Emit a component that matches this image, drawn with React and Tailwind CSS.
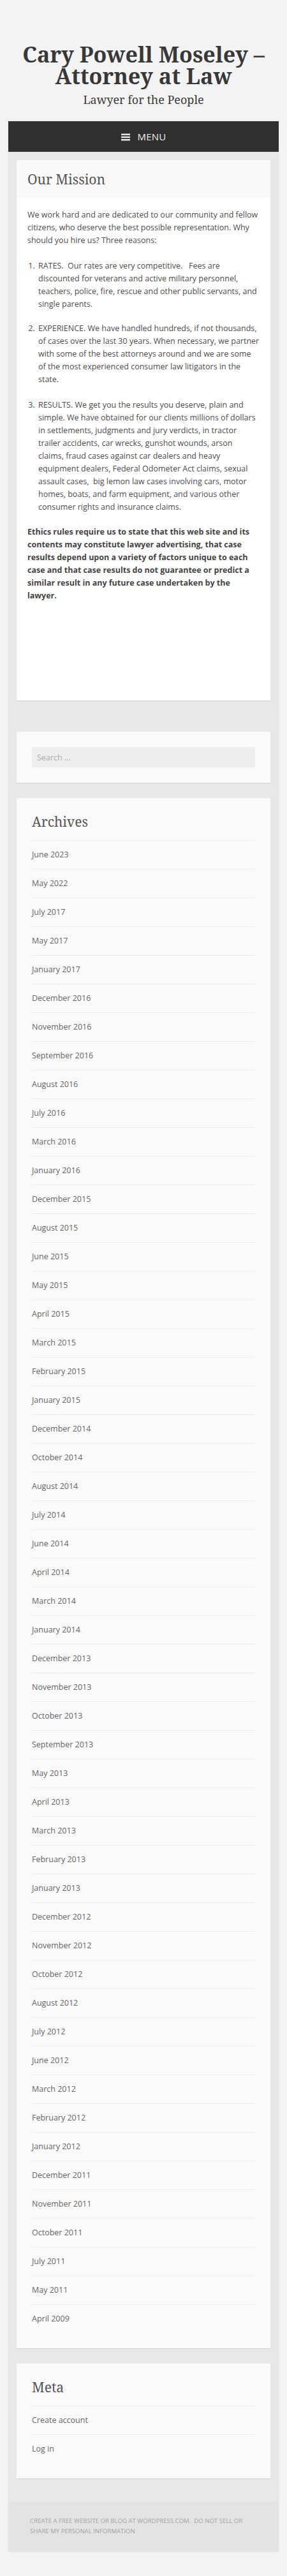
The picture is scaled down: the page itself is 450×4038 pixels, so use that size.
import React from "react";

const archives = [
  "June 2023", "May 2022", "July 2017", "May 2017", "January 2017", "December 2016",
  "November 2016", "September 2016", "August 2016", "July 2016", "March 2016", "January 2016",
  "December 2015", "August 2015", "June 2015", "May 2015", "April 2015", "March 2015",
  "February 2015", "January 2015", "December 2014", "October 2014", "August 2014", "July 2014",
  "June 2014", "April 2014", "March 2014", "January 2014", "December 2013", "November 2013",
  "October 2013", "September 2013", "May 2013", "April 2013", "March 2013", "February 2013",
  "January 2013", "December 2012", "November 2012", "October 2012", "August 2012", "July 2012",
  "June 2012", "March 2012", "February 2012", "January 2012", "December 2011", "November 2011",
  "October 2011", "July 2011", "May 2011", "April 2009",
];

const serif = "font-['Noto_Serif','DejaVu_Serif',serif]";
const sans = "font-['Open_Sans','Noto_Sans',sans-serif]";

const WidgetList = ({ title, items }) => (
  <section className="bg-[#fafafa] p-[24px] shadow-[0_1px_1px_rgba(0,0,0,0.08)]">
    <h2 className={`${serif} text-[21px] leading-[26px] mb-[16px] text-[#555]`}>{title}</h2>
    <ul className="text-[12.5px] leading-[20px]">
      {items.map((item) => (
        <li key={item} className="border-t border-[#ececec] py-[12px] h-[45px]">
          <a href="#" className="block text-[#666]">{item}</a>
        </li>
      ))}
    </ul>
  </section>
);

export default function App() {
  return (
    <div className={`${sans} min-h-[4038px] bg-[#f3f3f3] pb-[35px]`}>
      {/* Header */}
      <header className="pt-[68px] pb-[22px] text-center text-[#383838]">
        <h1 className={`${serif} font-bold text-[34px] leading-[34px] px-[16px]`}>
          Cary Powell Moseley – Attorney at Law
        </h1>
        <p className={`${serif} mt-[8px] text-[18px] leading-[24px] text-[#3a3a3a]`}>
          Lawyer for the People
        </p>
      </header>

      <div className="mx-[13px] bg-[#e8e8e8] shadow-[0_0_3px_rgba(0,0,0,0.06)]">
        {/* Menu */}
        <nav className="h-[48px] bg-[#2f2f2f] flex items-center justify-center gap-[12px]">
          <svg width="14" height="12" viewBox="0 0 14 12" className="mt-[1px]">
            <rect x="0" y="0.5" width="14" height="2.5" fill="#e6e6e6" />
            <rect x="0" y="4.75" width="14" height="2.5" fill="#e6e6e6" />
            <rect x="0" y="9" width="14" height="2.5" fill="#e6e6e6" />
          </svg>
          <span className="text-[15px] text-[#eeeeee] tracking-[0.2px]">MENU</span>
        </nav>

        <div className="p-[13px] pb-[36px]">
          {/* Mission card */}
          <article className="bg-white shadow-[0_1px_1px_rgba(0,0,0,0.08)]">
            <div className="bg-[#f9f9f9] h-[59px] px-[17px] pt-[16px]">
              <h2 className={`${serif} text-[21px] leading-[28px] text-[#555]`}>Our Mission</h2>
            </div>
            <div className="px-[17px] pt-[17px] pb-[154px] text-[12.5px] leading-[20px] text-[#4d4d4d]">
              <p className="mb-[20px]">
                We work hard and are dedicated to our community and fellow citizens, who deserve the best possible representation. Why should you hire us? Three reasons:
              </p>
              <ol className="list-decimal pl-[15px] mb-[19px]">
                <li className="mb-[18px] pl-[2px]">
                  RATES.&nbsp; Our rates are very competitive. &nbsp; Fees are discounted for veterans and active military personnel, teachers, police, fire, rescue and other public servants, and single parents.
                </li>
                <li className="mb-[20px] pl-[2px]">
                  EXPERIENCE. We have handled hundreds, if not thousands, of cases over the last 30 years. When necessary, we partner with some of the best attorneys around and we are some of the most experienced consumer law litigators in the state.
                </li>
                <li className="pl-[2px]">
                  RESULTS. We get you the results you deserve, plain and simple. We have obtained for our clients millions of dollars in settlements, judgments and jury verdicts, in tractor trailer accidents, car wrecks, gunshot wounds, arson claims, fraud cases against car dealers and heavy equipment dealers, Federal Odometer Act claims, sexual assault cases,&nbsp; big lemon law cases involving cars, motor homes, boats, and farm equipment, and various other consumer rights and insurance claims.
                </li>
              </ol>
              <p className="font-bold text-[#444]">
                Ethics rules require us to state that this web site and its contents may constitute lawyer advertising, that case results depend upon a variety of factors unique to each case and that case results do not guarantee or predict a similar result in any future case undertaken by the lawyer.
              </p>
            </div>
          </article>

          {/* Widgets */}
          <div className="mt-[49px] flex flex-col gap-[24px]">
            <section className="bg-[#fafafa] p-[24px] shadow-[0_1px_1px_rgba(0,0,0,0.08)]">
              <input
                type="search"
                placeholder="Search …"
                className="w-full h-[32px] bg-[#eeeeee] px-[8px] text-[12.5px] text-[#666] placeholder:text-[#ababab] outline-none"
              />
            </section>
            <WidgetList title="Archives" items={archives} />
            <WidgetList title="Meta" items={["Create account", "Log in"]} />
          </div>
        </div>

        {/* Footer */}
        <footer className="bg-[#e3e3e3] px-[34px] pt-[23px] pb-[24px] text-[9.6px] leading-[16px] uppercase text-[#a3a3a3]">
          <a href="#">Create a free website or blog at WordPress.com.</a>&nbsp;{" "}
          <a href="#">Do Not Sell or Share My Personal Information</a>
        </footer>
      </div>
    </div>
  );
}
